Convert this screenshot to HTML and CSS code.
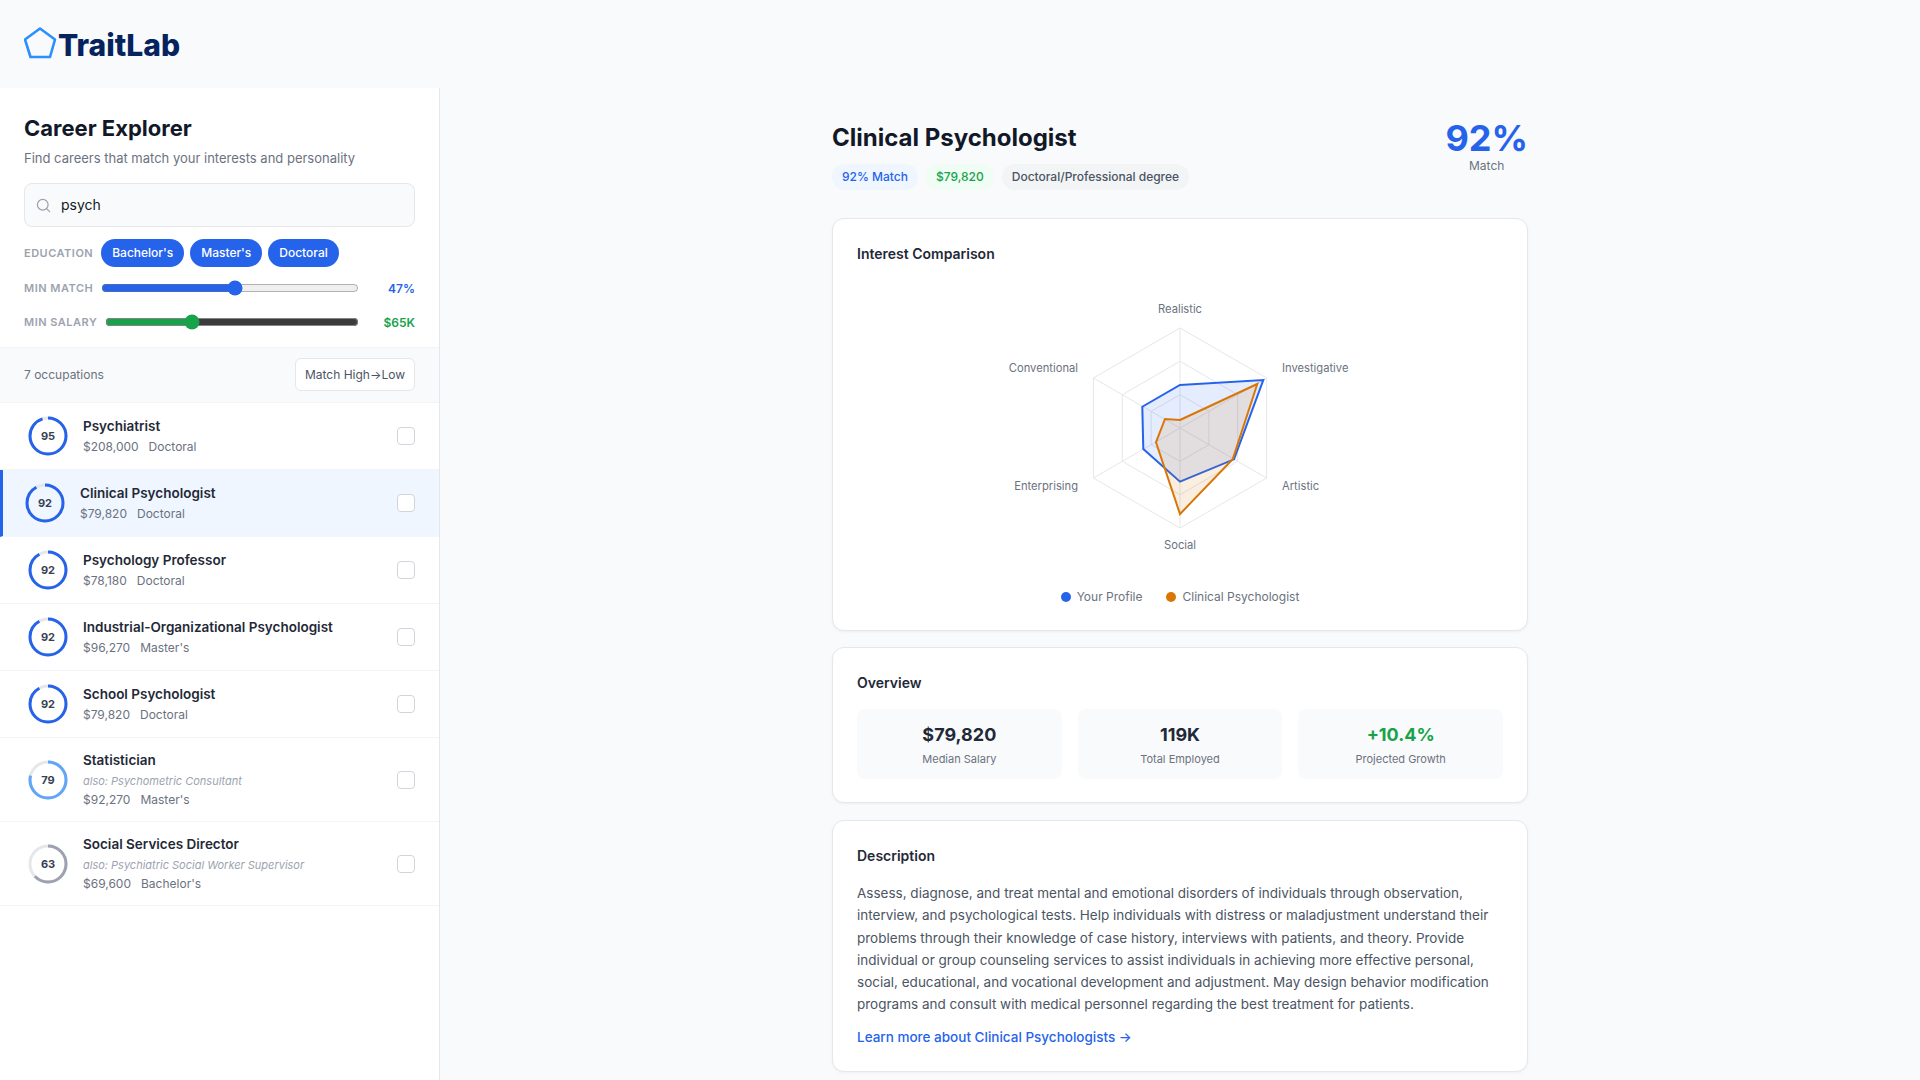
FILE: index.html
```html
<!DOCTYPE html>
<html lang="en">
<head>
<meta charset="utf-8">
<title>TraitLab</title>
<link rel="stylesheet" href="styles.css">
</head>
<body>
<header class="topbar">
  <svg class="logo-mark" width="36" height="36" viewBox="0 0 36 36"><polygon points="16,1.5 31,12.5 26,30 6.5,30 1,12.5" fill="none" stroke="#2b8fff" stroke-width="2.6" stroke-linejoin="round"/></svg>
  <span class="logo-text">TraitLab</span>
</header>
<div class="app">
  <aside class="sidebar">
    <div class="filters">
      <h1 class="side-title">Career Explorer</h1>
      <p class="side-sub">Find careers that match your interests and personality</p>
      <label class="search">
        <svg width="15" height="15" viewBox="0 0 16 16" fill="none" stroke="#9ca3af" stroke-width="1.3" stroke-linecap="round"><circle cx="7.2" cy="7.2" r="5.7"/><path d="M11.4 11.4 14.5 14.5"/></svg>
        <input class="search-input" type="text" value="psych">
      </label>
      <div class="filter-row edu">
        <span class="filter-label">Education</span>
        <span class="pill">Bachelor's</span>
        <span class="pill">Master's</span>
        <span class="pill">Doctoral</span>
      </div>
      <div class="filter-row range first-range">
        <span class="filter-label">Min Match</span>
        <input class="slider slider-blue" type="range" min="0" max="100" value="52">
        <span class="range-value blue">47%</span>
      </div>
      <div class="filter-row range">
        <span class="filter-label">Min Salary</span>
        <input class="slider slider-green" type="range" min="0" max="100" value="33">
        <span class="range-value green">$65K</span>
      </div>
    </div>
    <div class="list-bar">
      <span class="count">7 occupations</span>
      <button class="sort" type="button">Match High→Low</button>
    </div>
    <ul class="list">
      <li class="row">
        <div class="ring"><svg width="48" height="48" viewBox="0 0 48 48"><circle class="ring-track" cx="24" cy="24" r="18"/><circle class="ring-bar" cx="24" cy="24" r="18" pathLength="100" stroke-dasharray="95 100" stroke="#2563eb"/></svg><span class="ring-num">95</span></div>
        <div class="row-body"><div class="row-name">Psychiatrist</div><div class="row-meta"><span>$208,000</span><span>Doctoral</span></div></div>
        <span class="check"></span>
      </li>
      <li class="row selected">
        <div class="ring"><svg width="48" height="48" viewBox="0 0 48 48"><circle class="ring-track" cx="24" cy="24" r="18"/><circle class="ring-bar" cx="24" cy="24" r="18" pathLength="100" stroke-dasharray="92 100" stroke="#2563eb"/></svg><span class="ring-num">92</span></div>
        <div class="row-body"><div class="row-name">Clinical Psychologist</div><div class="row-meta"><span>$79,820</span><span>Doctoral</span></div></div>
        <span class="check"></span>
      </li>
      <li class="row">
        <div class="ring"><svg width="48" height="48" viewBox="0 0 48 48"><circle class="ring-track" cx="24" cy="24" r="18"/><circle class="ring-bar" cx="24" cy="24" r="18" pathLength="100" stroke-dasharray="92 100" stroke="#2563eb"/></svg><span class="ring-num">92</span></div>
        <div class="row-body"><div class="row-name">Psychology Professor</div><div class="row-meta"><span>$78,180</span><span>Doctoral</span></div></div>
        <span class="check"></span>
      </li>
      <li class="row">
        <div class="ring"><svg width="48" height="48" viewBox="0 0 48 48"><circle class="ring-track" cx="24" cy="24" r="18"/><circle class="ring-bar" cx="24" cy="24" r="18" pathLength="100" stroke-dasharray="92 100" stroke="#2563eb"/></svg><span class="ring-num">92</span></div>
        <div class="row-body"><div class="row-name">Industrial-Organizational Psychologist</div><div class="row-meta"><span>$96,270</span><span>Master's</span></div></div>
        <span class="check"></span>
      </li>
      <li class="row">
        <div class="ring"><svg width="48" height="48" viewBox="0 0 48 48"><circle class="ring-track" cx="24" cy="24" r="18"/><circle class="ring-bar" cx="24" cy="24" r="18" pathLength="100" stroke-dasharray="92 100" stroke="#2563eb"/></svg><span class="ring-num">92</span></div>
        <div class="row-body"><div class="row-name">School Psychologist</div><div class="row-meta"><span>$79,820</span><span>Doctoral</span></div></div>
        <span class="check"></span>
      </li>
      <li class="row">
        <div class="ring"><svg width="48" height="48" viewBox="0 0 48 48"><circle class="ring-track" cx="24" cy="24" r="18"/><circle class="ring-bar" cx="24" cy="24" r="18" pathLength="100" stroke-dasharray="79 100" stroke="#60a5fa"/></svg><span class="ring-num">79</span></div>
        <div class="row-body"><div class="row-name">Statistician</div><div class="row-also">also: Psychometric Consultant</div><div class="row-meta"><span>$92,270</span><span>Master's</span></div></div>
        <span class="check"></span>
      </li>
      <li class="row">
        <div class="ring"><svg width="48" height="48" viewBox="0 0 48 48"><circle class="ring-track" cx="24" cy="24" r="18"/><circle class="ring-bar" cx="24" cy="24" r="18" pathLength="100" stroke-dasharray="63 100" stroke="#9ca3af"/></svg><span class="ring-num">63</span></div>
        <div class="row-body"><div class="row-name">Social Services Director</div><div class="row-also">also: Psychiatric Social Worker Supervisor</div><div class="row-meta"><span>$69,600</span><span>Bachelor's</span></div></div>
        <span class="check"></span>
      </li>
    </ul>
  </aside>
  <main class="main">
    <div class="detail">
      <div class="detail-head">
        <div>
          <h2 class="detail-title">Clinical Psychologist</h2>
          <div class="tags">
            <span class="tag tag-blue">92% Match</span>
            <span class="tag tag-green">$79,820</span>
            <span class="tag tag-gray">Doctoral/Professional degree</span>
          </div>
        </div>
        <div class="score"><div class="score-num">92%</div><div class="score-label">Match</div></div>
      </div>
      <section class="card card-radar">
        <h3 class="card-title">Interest Comparison</h3>
        <svg class="radar" width="400" height="280" viewBox="980 288 400 280">
          <g fill="none" stroke="#e5e7eb" stroke-width="1">
            <polygon points="1180,328 1266.6,378 1266.6,478 1180,528 1093.4,478 1093.4,378"/>
            <polygon points="1180,361.3 1237.7,394.7 1237.7,461.3 1180,494.7 1122.3,461.3 1122.3,394.7"/>
            <polygon points="1180,394.7 1208.9,411.3 1208.9,444.7 1180,461.3 1151.1,444.7 1151.1,411.3"/>
            <path d="M1180 328V528M1093.4 378 1266.6 478M1266.6 378 1093.4 478"/>
          </g>
          <polygon points="1180,385 1263.3,380 1234,459.3 1180,481.7 1143.3,449 1142.3,406.7" fill="#2563eb" fill-opacity=".12" stroke="#2563eb" stroke-width="2"/>
          <polygon points="1180,420 1257.3,384 1232.7,459.3 1180,514 1156,442.3 1165,419" fill="#d97706" fill-opacity=".12" stroke="#d97706" stroke-width="2"/>
          <g class="radar-labels">
            <text x="1180" y="313" text-anchor="middle">Realistic</text>
            <text x="1282" y="372">Investigative</text>
            <text x="1282" y="490">Artistic</text>
            <text x="1180" y="549" text-anchor="middle">Social</text>
            <text x="1078" y="490" text-anchor="end">Enterprising</text>
            <text x="1078" y="372" text-anchor="end">Conventional</text>
          </g>
        </svg>
        <div class="legend">
          <span class="legend-item"><i class="dot dot-blue"></i>Your Profile</span>
          <span class="legend-item"><i class="dot dot-orange"></i>Clinical Psychologist</span>
        </div>
      </section>
      <section class="card">
        <h3 class="card-title">Overview</h3>
        <div class="stats">
          <div class="stat"><div class="stat-num">$79,820</div><div class="stat-label">Median Salary</div></div>
          <div class="stat"><div class="stat-num">119K</div><div class="stat-label">Total Employed</div></div>
          <div class="stat"><div class="stat-num green">+10.4%</div><div class="stat-label">Projected Growth</div></div>
        </div>
      </section>
      <section class="card">
        <h3 class="card-title">Description</h3>
        <p class="desc">Assess, diagnose, and treat mental and emotional disorders of individuals through observation, interview, and psychological tests. Help individuals with distress or maladjustment understand their problems through their knowledge of case history, interviews with patients, and theory. Provide individual or group counseling services to assist individuals in achieving more effective personal, social, educational, and vocational development and adjustment. May design behavior modification programs and consult with medical personnel regarding the best treatment for patients.</p>
        <a class="more" href="#">Learn more about Clinical Psychologists →</a>
      </section>
    </div>
  </main>
</div>
</body>
</html>
```
FILE: styles.css
```css
* { box-sizing: border-box; }
html, body { margin: 0; height: 100%; overflow: hidden; }
body { background: #f9fafb; font-family: Inter, "Liberation Sans", sans-serif; color: #111827; display: flex; flex-direction: column; }
h1, h2, h3, p, ul { margin: 0; padding: 0; }

.topbar { height: 88px; flex: none; display: flex; align-items: center; padding: 2px 0 0 24px; }
.logo-mark { margin-right: -1px; }
.logo-text { font-size: 30px; font-weight: 800; color: #05245e; margin-left: -1px; }

.app { flex: 1; display: flex; min-height: 0; }
.sidebar { width: 440px; flex: none; background: #fff; border-right: 1px solid #e5e7eb; overflow: hidden; }
.filters { padding: 25px 24px 8px; }
.side-title { font-size: 22px; font-weight: 700; line-height: 30px; color: #111827; }
.side-sub { font-size: 13px; line-height: 20px; color: #6b7280; margin-top: 5px; }
.search { display: flex; align-items: center; gap: 10px; height: 44px; margin-top: 15px; padding: 0 11px; background: #f9fafb; border: 1px solid #e5e7eb; border-radius: 8px; }
.search-input { flex: 1; min-width: 0; border: 0; background: none; outline: 0; padding: 0 0 2px; font: 14px Inter, sans-serif; color: #111827; }
.filter-row { display: flex; align-items: center; gap: 8px; }
.edu { gap: 6px; margin-top: 12px; }
.edu .filter-label { margin-right: 2px; }
.range { height: 34px; }
.first-range { margin-top: 4px; }
.filter-label { font-size: 11px; font-weight: 600; letter-spacing: .5px; text-transform: uppercase; color: #9ca3af; white-space: nowrap; }
.pill { height: 28px; line-height: 28px; padding: 0 11px; border-radius: 14px; background: #2563eb; color: #fff; font-size: 12px; font-weight: 500; }
.slider { flex: 1; min-width: 0; margin: 0; }
.slider-blue { accent-color: #2563eb; }
.slider-green { accent-color: #16a34a; }
.range-value { width: 48px; text-align: right; font-size: 12px; font-weight: 600; }
.blue { color: #2563eb; }
.green { color: #16a34a; }

.list-bar { display: flex; align-items: center; justify-content: space-between; height: 56px; padding: 0 24px 1px; background: #f9fafb; border-top: 1px solid #f3f4f6; border-bottom: 1px solid #f3f4f6; }
.count { font-size: 12px; color: #6b7280; }
.sort { height: 33px; padding: 0 9px; background: #fff; border: 1px solid #e5e7eb; border-radius: 6px; font: 12px Inter, sans-serif; color: #4b5563; }

.list { list-style: none; }
.row { display: flex; align-items: center; gap: 11px; padding: 11.5px 24px; border-bottom: 1px solid #f3f4f6; min-height: 67px; }
.selected { background: #eff6ff; border-left: 3px solid #2563eb; padding-left: 18px; border-bottom-color: #eff6ff; }
.ring { position: relative; width: 48px; height: 48px; flex: none; margin: -6px 0; }
.ring svg { display: block; transform: rotate(-90deg); }
.ring-track { fill: none; stroke: #e5e7eb; stroke-width: 3; }
.ring-bar { fill: none; stroke-width: 3; }
.ring-num { position: absolute; inset: 0; display: flex; align-items: center; justify-content: center; font-size: 11px; font-weight: 700; color: #374151; }
.row-body { flex: 1; min-width: 0; padding-bottom: 2px; }
.row-name { font-size: 13.5px; font-weight: 600; line-height: 20px; color: #1f2937; }
.row-also { font-size: 11px; font-style: italic; line-height: 15px; color: #9ca3af; margin-top: 4px; }
.row-meta { display: flex; gap: 10px; font-size: 12px; line-height: 16px; color: #6b7280; margin-top: 3px; }
.check { width: 18px; height: 18px; flex: none; background: #fff; border: 1px solid #d1d5db; border-radius: 4px; }

.main { flex: 1; min-width: 0; display: flex; justify-content: center; padding-top: 32px; }
.detail { width: 696px; }
.detail-head { display: flex; justify-content: space-between; align-items: flex-start; margin-bottom: 28px; }
.detail-title { font-size: 24px; font-weight: 700; line-height: 36px; color: #111827; }
.tags { display: flex; gap: 8px; margin-top: 8px; }
.tag { height: 26px; line-height: 26px; padding: 0 10px; border-radius: 13px; font-size: 12px; font-weight: 500; }
.tag-blue { background: #eff6ff; color: #2563eb; }
.tag-green { background: #f0fdf4; color: #16a34a; }
.tag-gray { background: #f3f4f6; color: #4b5563; }
.score { text-align: center; }
.score-num { font-size: 36px; font-weight: 700; line-height: 36px; color: #2563eb; }
.score-label { font-size: 12px; line-height: 16px; color: #6b7280; margin-top: 2px; }
.card { background: #fff; border: 1px solid #e5e7eb; border-radius: 12px; padding: 24px 24px 23px; margin-bottom: 17px; box-shadow: 0 1px 3px rgba(0,0,0,.05); }
.card-radar { margin-bottom: 16px; }
.card-title { font-size: 14px; font-weight: 600; line-height: 22px; color: #1f2937; }
.radar { display: block; margin: 23px auto 0; }
.radar-labels { font-size: 11.2px; fill: #6b7280; }
.legend { display: flex; justify-content: center; gap: 24px; margin: 21px 0 2px; font-size: 12px; line-height: 16px; color: #6b7280; }
.legend-item { display: flex; align-items: center; gap: 6px; }
.dot { width: 10px; height: 10px; border-radius: 50%; }
.dot-blue { background: #2563eb; }
.dot-orange { background: #d97706; }
.stats { display: grid; grid-template-columns: repeat(3, 1fr); gap: 16px; margin-top: 15px; }
.stat { height: 70px; background: #f9fafb; border-radius: 8px; text-align: center; padding-top: 14px; }
.stat-num { font-size: 18px; font-weight: 700; line-height: 24px; color: #1f2937; }
.stat-label { font-size: 11px; line-height: 16px; color: #6b7280; margin-top: 4px; }
.stat-num.green { color: #16a34a; }
.desc { font-size: 13.5px; line-height: 22.3px; color: #4b5563; margin-top: 15px; }
.more { display: block; font-size: 13.5px; font-weight: 500; line-height: 20px; color: #2563eb; text-decoration: none; margin: 11.5px 0 1px; }
```
